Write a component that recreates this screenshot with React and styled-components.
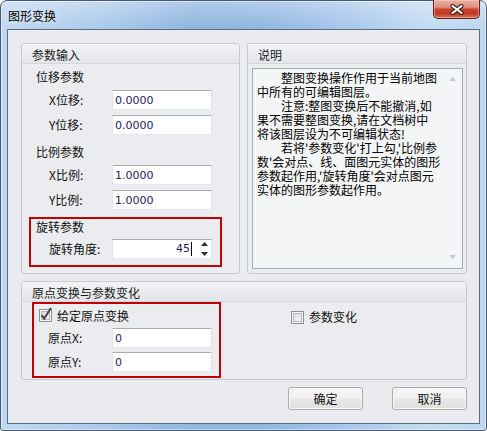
import React from 'react';
import styled, { createGlobalStyle } from 'styled-components';

const GlobalStyle = createGlobalStyle`
  html, body {
    margin: 0;
    padding: 0;
    background: #fff;
  }
  body {
    font-family: "Noto Sans CJK SC", "Noto Sans", sans-serif;
    font-size: 12px;
    color: #000;
  }
  * {
    box-sizing: border-box;
  }
`;

const Window = styled.div`
  width: 487px;
  height: 431px;
  border: 1px solid #4a5b70;
  border-radius: 7px 7px 3px 3px;
  padding: 0 6px 6px;
  display: flex;
  flex-direction: column;
  background:
    linear-gradient(180deg, rgba(255, 255, 255, 0.3) 0, rgba(255, 255, 255, 0) 26px),
    linear-gradient(90deg, #bfd8f2 0%, #aecbeb 20%, #8fb5e0 40%, #93b8e2 55%, #a9c8eb 72%, #c4dcf4 88%, #bcd6f1 100%);
  box-shadow: inset 0 0 0 1px rgba(255, 255, 255, 0.45);
`;

const TitleBar = styled.div`
  height: 28px;
  display: flex;
  justify-content: space-between;
  align-items: flex-start;
`;

const Title = styled.div`
  padding: 7px 0 0 1px;
  line-height: 16px;
  font-size: 12px;
  color: #000;
  text-shadow: 0 0 6px rgba(255, 255, 255, 0.9);
`;

const CloseButton = styled.div`
  width: 47px;
  height: 19px;
  margin-top: -1px;
  border: 1px solid #5e241b;
  border-top: none;
  border-radius: 0 0 5px 5px;
  background: linear-gradient(180deg, #eab0a2 0%, #df8f7d 40%, #c8442c 52%, #c23a22 75%, #d7705a 100%);
  box-shadow: inset 0 0 0 1px rgba(255, 220, 210, 0.45);
  display: flex;
  align-items: center;
  justify-content: center;
`;

const Client = styled.div`
  flex: 1;
  border: 1px solid #5d6e84;
  background: #e9ebee;
  padding: 13px 12px 12px 13px;
  display: flex;
  flex-direction: column;
`;

const TopRow = styled.div`
  display: grid;
  grid-template-columns: 219px 220px;
  gap: 7px;
  height: 231px;
`;

const Group = styled.section`
  border: 1px solid #c5c9d0;
  border-radius: 3px;
  background: #eaecef;
  display: flex;
  flex-direction: column;
  overflow: hidden;
  height: ${(p) => (p.$height ? `${p.$height}px` : 'auto')};
  margin-top: ${(p) => p.$top || 0}px;
`;

const GroupHeader = styled.div`
  height: 20px;
  flex: none;
  border-bottom: 1px solid #d3d6db;
  background: linear-gradient(180deg, #f2f3f5, #e3e5e9);
  padding: 3px 0 0 10px;
  line-height: 16px;
  color: #1a1a1a;
`;

const SectionTitle = styled.div`
  height: ${(p) => p.$h || 20}px;
  line-height: ${(p) => p.$h || 20}px;
  margin-top: ${(p) => p.$gap || 0}px;
  padding-left: ${(p) => p.$indent}px;
  color: #111;
`;

const Row = styled.div`
  display: flex;
  align-items: center;
  height: 20px;
  margin-top: ${(p) => p.$gap}px;
  padding-left: ${(p) => p.$indent}px;
`;

const Label = styled.span`
  width: ${(p) => p.$w || 63}px;
  flex: none;
  line-height: 20px;
  color: #111;
`;

const TextBox = styled.input`
  width: 100px;
  height: 20px;
  margin: 0;
  border: 1px solid;
  border-color: #abadb3 #dbdfe6 #e3e9ef #e2e3ea;
  border-radius: 0;
  background: #fff;
  padding: 0 2px;
  font-family: "DejaVu Sans", sans-serif;
  font-size: 11px;
  line-height: 18px;
  color: #1e1c5c;
  outline: none;
`;

const SpinBox = styled.div`
  width: 100px;
  height: 20px;
  border: 1px solid;
  border-color: #abadb3 #dbdfe6 #e3e9ef #e2e3ea;
  background: #fff;
  display: flex;
  align-items: center;
  padding-right: 3px;
`;

const SpinValue = styled.span`
  flex: 1;
  text-align: right;
  font-family: "DejaVu Sans", sans-serif;
  font-size: 11px;
  line-height: 18px;
  color: #1e1c5c;
`;

const Caret = styled.span`
  width: 1px;
  height: 14px;
  margin: 0 9px 0 1px;
  background: #000;
`;

const Highlight = styled.div`
  width: ${(p) => p.$width}px;
  height: ${(p) => p.$height}px;
  margin-left: ${(p) => p.$left}px;
  margin-top: ${(p) => p.$top || 0}px;
  border: 2px solid #c00000;
  flex: none;
`;

const Memo = styled.div`
  flex: 1;
  margin: 4px 3px 4px 4px;
  border: 1px solid #a7adb6;
  background: #f4f5f7;
  display: flex;
`;

const MemoText = styled.div`
  flex: 1;
  padding: 2px 0 0 4px;
  line-height: 14px;
  white-space: pre;
  color: #000;
`;

const ScrollTrack = styled.div`
  width: 15px;
  margin-right: 2px;
  padding: 8px 0 9px;
  display: flex;
  flex-direction: column;
  justify-content: space-between;
  align-items: center;
`;

const GroupBody = styled.div`
  display: flex;
  align-items: flex-start;
`;

const CheckRow = styled.div`
  display: flex;
  align-items: center;
  gap: 4px;
  height: 13px;
  margin-top: ${(p) => p.$top}px;
  margin-left: ${(p) => p.$left}px;
  line-height: 16px;
  color: #111;
`;

const ButtonRow = styled.div`
  display: flex;
  justify-content: flex-end;
  gap: 29px;
  margin-top: 7px;
`;

const Button = styled.button`
  width: 75px;
  height: 23px;
  border: 1px solid #a9a9a9;
  border-radius: 3px;
  background: linear-gradient(180deg, #f5f5f5 0%, #efefef 50%, #e6e6e6 51%, #e0e0e0 100%);
  box-shadow: inset 0 0 0 1px #fbfbfb;
  font-family: "Noto Sans CJK SC", sans-serif;
  font-size: 12px;
  color: #111;
  padding: 0;
`;

function CheckBox({ checked }) {
  return (
    <svg width="14" height="15" viewBox="0 0 14 15" style={{ marginTop: checked ? -2 : 0 }}>
      <defs>
        <linearGradient id={checked ? 'cbA' : 'cbB'} x1="0" y1="0" x2="1" y2="1">
          <stop offset="0" stopColor="#d9dadc" />
          <stop offset="1" stopColor="#f7f7f8" />
        </linearGradient>
      </defs>
      <rect x="0.5" y="2.5" width="12" height="12" fill="#f4f4f4" stroke="#8e8f8f" />
      <rect x="2.5" y="4.5" width="8" height="8" fill={`url(#${checked ? 'cbA' : 'cbB'})`} stroke="#b8b9bb" />
      {checked && (
        <path d="M2.6 8.2 L5.2 11.6 L12 1" fill="none" stroke="#4b4b4b" strokeWidth="2.1" />
      )}
    </svg>
  );
}

const memoLines = [
  '\u3000\u3000整图变换操作作用于当前地图',
  '中所有的可编辑图层。',
  '\u3000\u3000注意:整图变换后不能撤消,如',
  '果不需要整图变换,请在文档树中',
  '将该图层设为不可编辑状态!',
  "\u3000\u3000若将'参数变化'打上勾,'比例参",
  "数'会对点、线、面图元实体的图形",
  "参数起作用,'旋转角度'会对点图元",
  '实体的图形参数起作用。',
];

export default function App() {
  return (
    <>
      <GlobalStyle />
      <Window>
        <TitleBar>
          <Title>图形变换</Title>
          <CloseButton>
            <svg width="14" height="11" viewBox="0 0 14 11">
              <path d="M2.5 2 L11.5 9 M11.5 2 L2.5 9" stroke="#3b1f1a" strokeWidth="4.2" strokeLinecap="round" />
              <path d="M2.5 2 L11.5 9 M11.5 2 L2.5 9" stroke="#fff" strokeWidth="2.2" strokeLinecap="round" />
            </svg>
          </CloseButton>
        </TitleBar>
        <Client>
          <TopRow>
            <Group>
              <GroupHeader>参数输入</GroupHeader>
              <SectionTitle $gap={3} $indent={14}>位移参数</SectionTitle>
              <Row $gap={3} $indent={27}>
                <Label>X位移:</Label>
                <TextBox defaultValue="0.0000" readOnly />
              </Row>
              <Row $gap={5} $indent={27}>
                <Label>Y位移:</Label>
                <TextBox defaultValue="0.0000" readOnly />
              </Row>
              <SectionTitle $gap={7} $indent={14}>比例参数</SectionTitle>
              <Row $gap={3} $indent={27}>
                <Label>X比例:</Label>
                <TextBox defaultValue="1.0000" readOnly />
              </Row>
              <Row $gap={5} $indent={27}>
                <Label>Y比例:</Label>
                <TextBox defaultValue="1.0000" readOnly />
              </Row>
              <Highlight $left={7} $top={7} $width={193} $height={50}>
                <SectionTitle $h={16} $indent={5}>旋转参数</SectionTitle>
                <Row $gap={4} $indent={18}>
                  <Label>旋转角度:</Label>
                  <SpinBox>
                    <SpinValue>45</SpinValue>
                    <Caret />
                    <svg width="7" height="16" viewBox="0 0 7 16">
                      <path d="M0 5 L3.5 1 L7 5 Z" fill="#2b2b2b" />
                      <path d="M0 11 L3.5 15 L7 11 Z" fill="#2b2b2b" />
                    </svg>
                  </SpinBox>
                </Row>
              </Highlight>
            </Group>
            <Group>
              <GroupHeader>说明</GroupHeader>
              <Memo>
                <MemoText>{memoLines.join('\n')}</MemoText>
                <ScrollTrack>
                  <svg width="7" height="4" viewBox="0 0 7 4">
                    <path d="M0 4 L3.5 0 L7 4 Z" fill="#c3c7cd" />
                  </svg>
                  <svg width="7" height="4" viewBox="0 0 7 4">
                    <path d="M0 0 L3.5 4 L7 0 Z" fill="#c3c7cd" />
                  </svg>
                </ScrollTrack>
              </Memo>
            </Group>
          </TopRow>
          <Group $top={7} $height={99}>
            <GroupHeader>原点变换与参数变化</GroupHeader>
            <GroupBody>
              <Highlight $left={10} $width={189} $height={76}>
                <CheckRow $top={5} $left={5}>
                  <CheckBox checked />
                  <span>给定原点变换</span>
                </CheckRow>
                <Row $gap={6} $indent={14}>
                  <Label $w={64}>原点X:</Label>
                  <TextBox defaultValue="0" readOnly />
                </Row>
                <Row $gap={4} $indent={14}>
                  <Label $w={64}>原点Y:</Label>
                  <TextBox defaultValue="0" readOnly />
                </Row>
              </Highlight>
              <CheckRow $top={8} $left={70}>
                <CheckBox />
                <span>参数变化</span>
              </CheckRow>
            </GroupBody>
          </Group>
          <ButtonRow>
            <Button>确定</Button>
            <Button>取消</Button>
          </ButtonRow>
        </Client>
      </Window>
    </>
  );
}
